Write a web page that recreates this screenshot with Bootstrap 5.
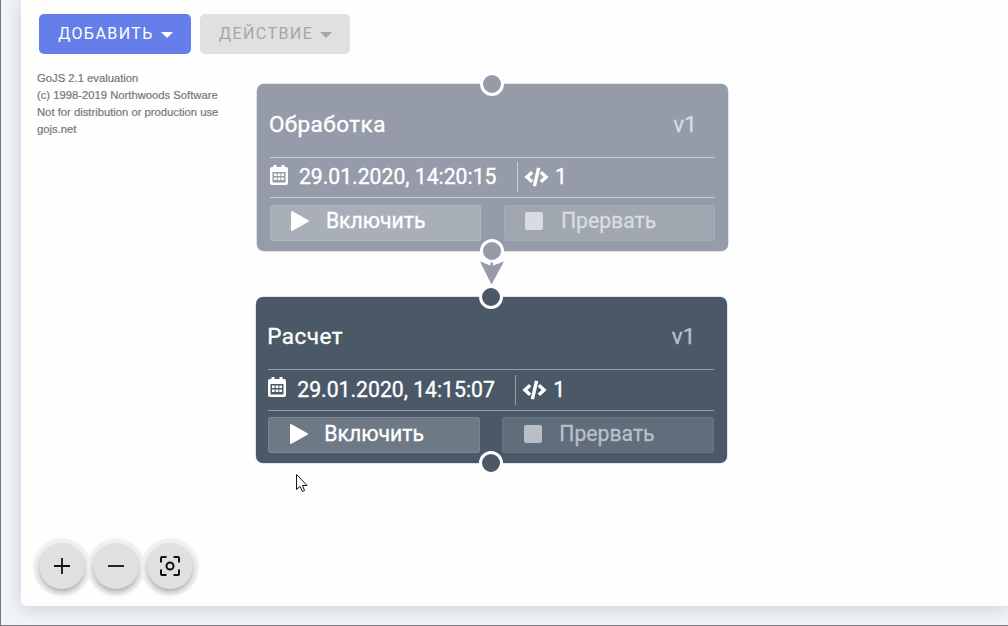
<!DOCTYPE html>
<html lang="ru">
<head>
<meta charset="utf-8">
<meta name="viewport" content="width=device-width, initial-scale=1">
<title>Диаграмма</title>
<link href="https://cdn.jsdelivr.net/npm/bootstrap@5.3.0/dist/css/bootstrap.min.css" rel="stylesheet">
<style>
body{height:626px;background:#f1f4f8;border-left:1px solid #77777a;border-bottom:1px solid #77777a;font-family:Roboto,sans-serif;padding:0 0 19px 20px}
.board{background:#fefefe;border-bottom-left-radius:5px;box-shadow:0 2px 18px rgba(80,95,125,.25);padding:14px 0 17px 18px}
.tool{height:40px;border:0;border-radius:5px;font-size:16px;letter-spacing:1.43px;padding:0 18px 0 19px;white-space:nowrap}
.tool::after{border-top-width:6px;border-left-width:6px;border-right-width:6px;margin-left:7px;vertical-align:1px}
.tool-add,.tool-add:hover{width:152px;background:#667eea;color:#fff}
.tool-act:disabled{width:150px;background:#e0e0e0;color:#a6a6a6;opacity:1}
.notice{font:11.25px/17px "Liberation Sans",Arial,sans-serif;color:#777;margin:16px 0 0 -2px;-webkit-text-stroke:.2px #777}
.node{left:var(--x);top:var(--y);width:471px;height:166.5px;border-radius:7px;color:#fff;background:var(--fill);padding:0 13px 0 12.5px;font-size:21.2px;-webkit-text-stroke:.35px currentColor;box-shadow:0 0 0 .5px rgba(150,160,175,.6)}
.node-a{--x:257.4px;--y:84px;--fill:#959ba9;--rule:#c7cbd2;--b1:#a9afb9;--b2:#a0a7b0;--dim:#d8dbe1}
.node-b{--x:255.8px;--y:296.5px;--fill:#4a5867;--rule:#949ca6;--b1:#6e7986;--b2:#606d7b;--dim:#b9bfc6}
.node-head{height:72.5px;padding-top:9px;font-size:22.5px;padding-right:18.5px;margin-left:-1px}
.node-title{letter-spacing:.45px}
.faded{color:var(--dim)}
.node-info{height:41.5px;border-top:1.5px solid var(--rule);border-bottom:1.5px solid var(--rule);white-space:nowrap}
.stamp{width:248px;height:30px;border-right:1.5px solid var(--rule);gap:11px}
.code-mark{margin-left:6px}
.node-acts{gap:22.5px;padding-top:6.5px}
.act{flex:1;height:36px;border-radius:3px;background:var(--b1);border:1px solid rgba(255,255,255,.1);padding:0 0 3px 20.5px;gap:16.5px}
.act-off{background:var(--b2);color:var(--dim);border-color:rgba(255,255,255,.06)}
.port{width:24px;height:24px;border:3.5px solid #fff;border-radius:50%;background:var(--fill);left:223px}
.port-in{top:-12px}.port-out{bottom:-12px}
.round{width:46px;height:46px;border:0;border-radius:50%;background:#e0e0e0;color:#111;padding:0;box-shadow:0 3px 5px -1px rgba(0,0,0,.25),0 4px 8px rgba(0,0,0,.1),0 1px 0 6px #f2f2f2}
.zoom-bar{gap:8px;margin-left:-.5px}
.link-arrow{left:480px;top:260px}
.pointer-mark{left:295px;top:473px}
</style>
</head>
<body class="overflow-hidden">
<main class="board h-100 d-flex flex-column">
  <div class="d-flex" style="gap:9px">
    <button class="btn tool tool-add dropdown-toggle" data-bs-toggle="dropdown">ДОБАВИТЬ</button>
    <button class="btn tool tool-act dropdown-toggle" disabled>ДЕЙСТВИЕ</button>
  </div>
  <div class="notice">GoJS 2.1 evaluation<br>(c) 1998-2019 Northwoods Software<br>Not for distribution or production use<br>gojs.net</div>
  <div class="zoom-bar d-flex mt-auto">
    <button class="round d-flex align-items-center justify-content-center" aria-label="+"><svg width="24" height="24" viewBox="0 0 24 24" stroke="currentColor" stroke-width="1.800"><path d="M4 12h16M12 4v16"/></svg></button>
    <button class="round d-flex align-items-center justify-content-center" aria-label="−"><svg width="24" height="24" viewBox="0 0 24 24" stroke="currentColor" stroke-width="1.800"><path d="M4 12h16"/></svg></button>
    <button class="round d-flex align-items-center justify-content-center" aria-label="[ ]"><svg width="24" height="24" viewBox="0 0 24 24" fill="none" stroke="currentColor" stroke-width="2"><path d="M3 8.500V4a1 1 0 0 1 1-1h4.500M15.500 3H20a1 1 0 0 1 1 1v4.500M21 15.500V20a1 1 0 0 1-1 1h-4.500M8.500 21H4a1 1 0 0 1-1-1v-4.500"/><circle cx="12" cy="12" r="3.500"/></svg></button>
  </div>
</main>

<svg class="d-none">
  <symbol id="calendar" viewBox="0 0 18 20"><path fill="currentColor" fill-rule="evenodd" d="M3.500 0h3v2h5V0h3v2H16q2 0 2 2v14q0 2-2 2H2q-2 0-2-2V4q0-2 2-2h1.500zM2.500 7v10.500h13V7z"/><path fill="currentColor" d="M4 8.500h2.700v2.500H4zm3.700 0h2.700v2.500H7.700zm3.600 0H14v2.500h-2.700zM4 12.500h2.700V15H4zm3.700 0h2.700V15H7.700zm3.600 0H14V15h-2.700z"/></symbol>
  <symbol id="code" viewBox="0 0 26 20"><path fill="none" stroke="currentColor" stroke-width="3.600" d="M8.500 5L3 10l5.500 5M17.500 5l5.500 5-5.500 5M15.200 .5l-4.400 19"/></symbol>
  <symbol id="start" viewBox="0 0 18 20"><path fill="currentColor" stroke="currentColor" stroke-width="2" stroke-linejoin="round" d="M1 1v18l16-9z"/></symbol>
</svg>

<section class="node node-a position-absolute">
  <div class="node-head d-flex align-items-center justify-content-between"><span class="node-title">Обработка</span><span class="faded">v1</span></div>
  <div class="node-info d-flex align-items-center">
    <div class="stamp d-flex align-items-center"><svg width="18" height="20" style="margin-top:-5px"><use href="#calendar"/></svg><span>29.01.2020, 14:20:15</span></div>
    <svg class="code-mark" width="25" height="20"><use href="#code"/></svg><span style="margin-left:6px">1</span>
  </div>
  <div class="node-acts d-flex">
    <div class="act d-flex align-items-center"><svg width="18" height="20"><use href="#start"/></svg>Включить</div>
    <div class="act act-off d-flex align-items-center"><svg width="19" height="18"><rect width="18" height="18" rx="2" fill="currentColor"/></svg><span>Прервать</span></div>
  </div>
  <i class="port port-in position-absolute"></i><i class="port port-out position-absolute"></i>
</section>

<svg class="link-arrow position-absolute" width="24" height="25"><path fill="#959ba9" d="M0 1.500l10.500 4V2.500h2.500v3l11-4-12.500 23z"/></svg>

<section class="node node-b position-absolute">
  <div class="node-head d-flex align-items-center justify-content-between"><span class="node-title">Расчет</span><span class="faded">v1</span></div>
  <div class="node-info d-flex align-items-center">
    <div class="stamp d-flex align-items-center"><svg width="18" height="20" style="margin-top:-5px"><use href="#calendar"/></svg><span>29.01.2020, 14:15:07</span></div>
    <svg class="code-mark" width="25" height="20"><use href="#code"/></svg><span style="margin-left:6px">1</span>
  </div>
  <div class="node-acts d-flex">
    <div class="act d-flex align-items-center"><svg width="18" height="20"><use href="#start"/></svg>Включить</div>
    <div class="act act-off d-flex align-items-center"><svg width="19" height="18"><rect width="18" height="18" rx="2" fill="currentColor"/></svg><span>Прервать</span></div>
  </div>
  <i class="port port-in position-absolute"></i><i class="port port-out position-absolute"></i>
</section>

<svg class="pointer-mark position-absolute" width="14" height="20"><path fill="#fff" stroke="#16161e" d="M1.500 1.500v15l3.500-3 2.500 5 2-1-2-5h4.500z"/></svg>
<script src="https://cdn.jsdelivr.net/npm/bootstrap@5.3.0/dist/js/bootstrap.bundle.min.js"></script>
</body>
</html>
